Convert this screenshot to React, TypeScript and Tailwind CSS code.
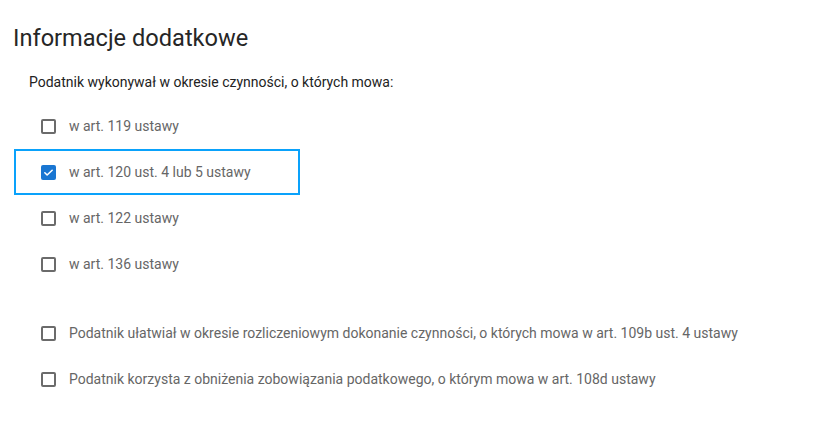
import { useState } from "react";

interface Item {
  id: string;
  label: string;
}

const groupA: Item[] = [
  { id: "a119", label: "w art. 119 ustawy" },
  { id: "a120", label: "w art. 120 ust. 4 lub 5 ustawy" },
  { id: "a122", label: "w art. 122 ustawy" },
  { id: "a136", label: "w art. 136 ustawy" },
];

const groupB: Item[] = [
  {
    id: "b109",
    label:
      "Podatnik ułatwiał w okresie rozliczeniowym dokonanie czynności, o których mowa w art. 109b ust. 4 ustawy",
  },
  {
    id: "b108",
    label: "Podatnik korzysta z obniżenia zobowiązania podatkowego, o którym mowa w art. 108d ustawy",
  },
];

function Check({ checked }: { checked: boolean }) {
  if (checked) {
    return (
      <span className="flex h-[15px] w-[15px] shrink-0 items-center justify-center rounded-[2px] bg-[#1976d2]">
        <svg width="11" height="11" viewBox="0 0 24 24" fill="none" stroke="#fff" strokeWidth="3.4" strokeLinecap="round" strokeLinejoin="round">
          <path d="M4 12.5l5 5L20 7" />
        </svg>
      </span>
    );
  }
  return <span className="h-[15px] w-[15px] shrink-0 rounded-[2px] border-2 border-[#6b6b6b] bg-white" />;
}

function Row({
  item,
  checked,
  focused,
  onToggle,
}: {
  item: Item;
  checked: boolean;
  focused: boolean;
  onToggle: () => void;
}) {
  return (
    <div
      onClick={onToggle}
      className={`ml-[14px] flex h-[46px] cursor-pointer items-center gap-[13px] border-2 pl-[25px] ${
        focused ? "w-[286px] border-[#0aa2fb]" : "border-transparent"
      }`}
    >
      <Check checked={checked} />
      <span className="text-[14px] text-[#666666]">{item.label}</span>
    </div>
  );
}

export default function App() {
  const [checked, setChecked] = useState<Record<string, boolean>>({ a120: true });
  const [focus, setFocus] = useState("a120");

  const toggle = (id: string) => {
    setChecked((c) => ({ ...c, [id]: !c[id] }));
    setFocus(id);
  };

  return (
    <div className="min-h-[426px] w-full bg-white pt-[22px] font-['Roboto',sans-serif]">
      <h2 className="pl-[13px] text-[23.6px] leading-[32px] text-[#262626]">Informacje dodatkowe</h2>
      <p className="mt-[18px] pl-[29px] text-[14px] leading-[20px] text-[#222222]">
        Podatnik wykonywał w okresie czynności, o których mowa:
      </p>
      <div className="mt-[11px]">
        {groupA.map((it) => (
          <Row key={it.id} item={it} checked={!!checked[it.id]} focused={focus === it.id} onToggle={() => toggle(it.id)} />
        ))}
      </div>
      <div className="mt-[23px]">
        {groupB.map((it) => (
          <Row key={it.id} item={it} checked={!!checked[it.id]} focused={focus === it.id} onToggle={() => toggle(it.id)} />
        ))}
      </div>
    </div>
  );
}
